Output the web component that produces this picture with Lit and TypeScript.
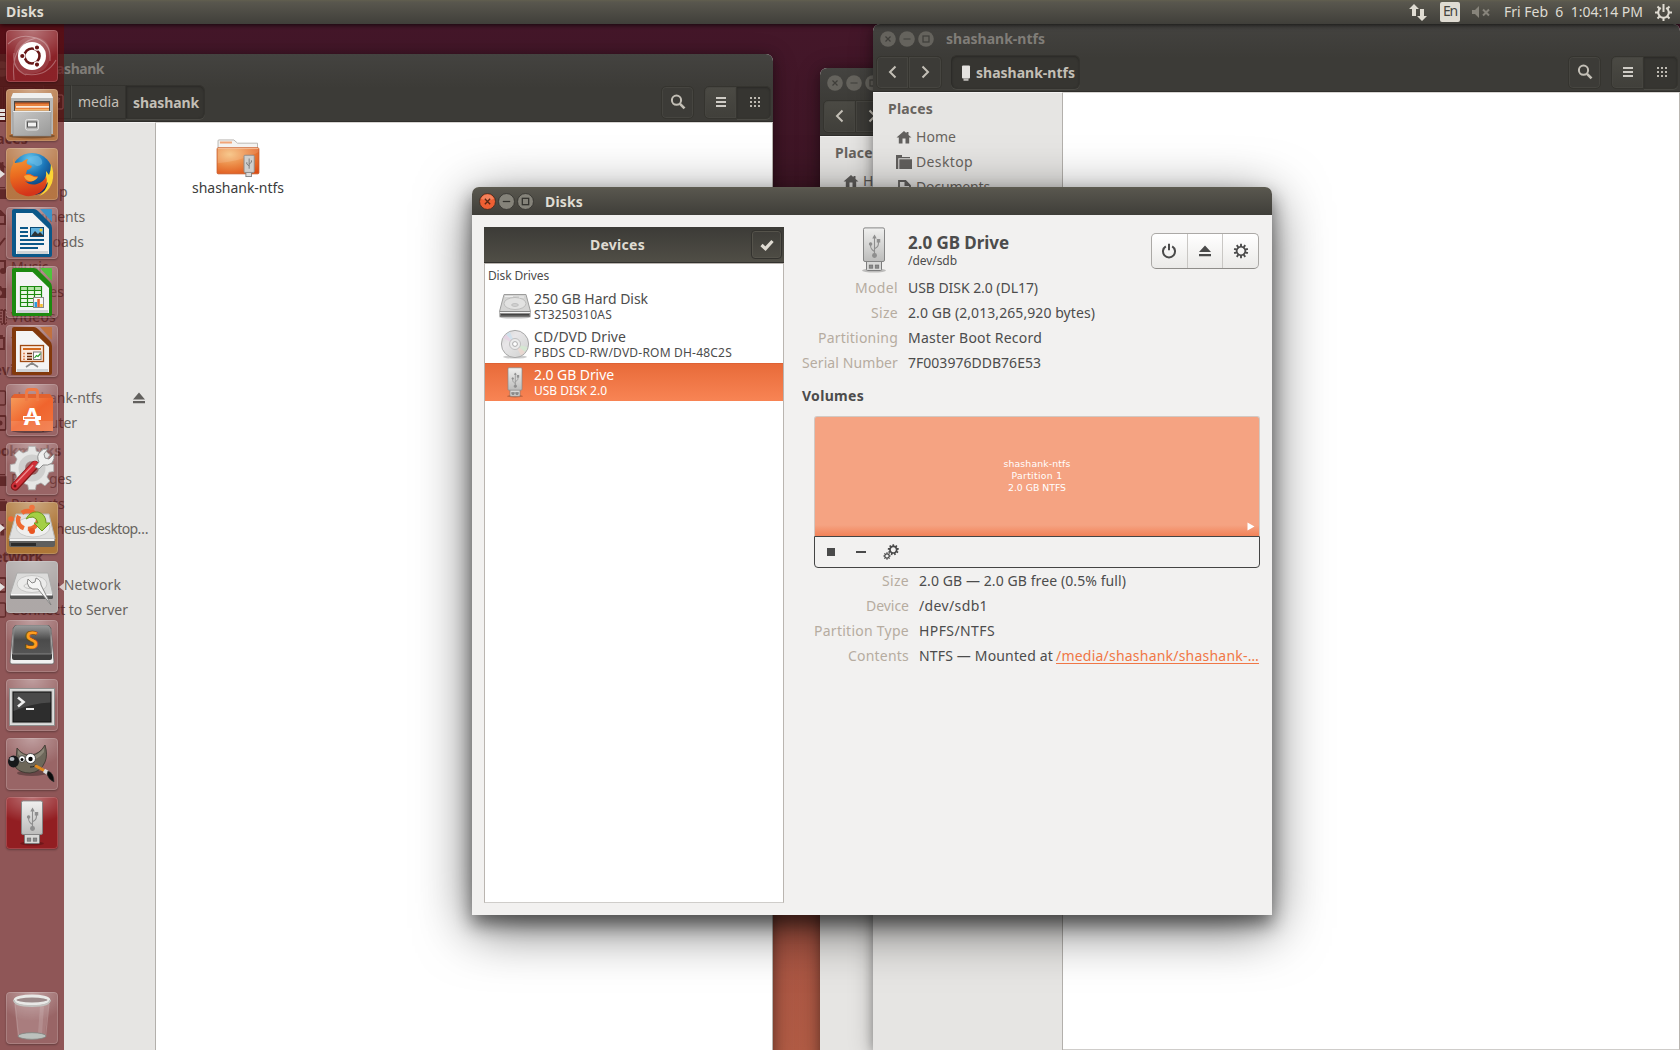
import { LitElement, html, svg, css, nothing } from "lit";
import { customElement, property, query } from "lit/decorators.js";

/* ---------- text that is tracked to a given advance width ---------- */
@customElement("fit-text")
class FitText extends LitElement {
  static styles = css`
    :host { display: inline-block; white-space: pre; flex: none; }
  `;
  @property() text = "";
  @property({ type: Number }) w = 0;
  @query("span") span!: HTMLSpanElement;
  render() {
    return html`<span>${this.text}</span>`;
  }
  updated() {
    this.span.style.letterSpacing = "0px";
    if (!this.w) return;
    const now = this.span.getBoundingClientRect().width;
    this.span.style.letterSpacing = `${(this.w - now) / this.text.length}px`;
  }
}

const t = (text: string, w = 0) => html`<fit-text .text=${text} .w=${w}></fit-text>`;

/* ---------- shared drawings ---------- */
const usb = (w: number, h: number) => html`
  <svg width=${w} height=${h} viewBox="0 0 24 46">
    <defs>
      <linearGradient id="ub" x1="0" y1="0" x2="0" y2="1">
        <stop offset="0" stop-color="#f0f0ef" /><stop offset="1" stop-color="#bcbcbb" />
      </linearGradient>
    </defs>
    <ellipse cx="12" cy="43.5" rx="12" ry="2" fill="#000" opacity=".22" />
    <rect x="4.5" y="33" width="15" height="10.5" rx="1" fill="#d8d8d7" stroke="#7c7c7c" />
    <rect x="7.2" y="38" width="3.6" height="3.2" fill="#8a8a8a" stroke="#666" stroke-width=".6" />
    <rect x="13.2" y="38" width="3.6" height="3.2" fill="#8a8a8a" stroke="#666" stroke-width=".6" />
    <rect x="1.5" y=".9" width="21" height="33.6" rx="1.5" fill="url(#ub)" stroke="#858585" />
    <g fill="#8e8e8e" stroke="#8e8e8e" stroke-width="1.1">
      <path d="M12.5 10v18M12.5 24.5C8 22 8.6 20 8.6 17.5M12.5 21.8c4-2 4-4 4-6.8" fill="none" />
      <circle cx="12.5" cy="28.5" r="1.9" />
      <circle cx="8.6" cy="17" r="1.2" />
      <rect x="15.3" y="12.6" width="2.4" height="2.4" />
      <path d="M12.5 8.6l1.3 2.4h-2.6z" />
    </g>
  </svg>`;

const gearPath = (cx: number, cy: number, ro: number, ri: number, n: number) => {
  const p: string[] = [];
  for (let i = 0; i < n; i++) {
    const a = (i / n) * Math.PI * 2 - Math.PI / 2;
    const s = Math.PI / n;
    for (const [r, d] of [[ri, -0.62], [ro, -0.4], [ro, 0.4], [ri, 0.62]]) {
      p.push(`${(cx + r * Math.cos(a + d * s)).toFixed(2)} ${(cy + r * Math.sin(a + d * s)).toFixed(2)}`);
    }
  }
  return `M${p.join("L")}Z`;
};

/* ---------- file manager window ---------- */
const side: Record<string, unknown> = {
  home: svg`<path d="M8 2L.5 8.500h2.300V14.500h3.700V9.500h3v5h3.700V8.500h2.300L12.500 6V3h-2v1.200z"/>`,
  folder: svg`<path d="M0 1h6v2h8v1.200H2.300V15H0z"/><path d="M3.300 5.200H16V15H3.300z"/>`,
  doc: svg`<path d="M3 2h6.500L14 6.500V15H3z" fill="none" stroke="currentColor" stroke-width="1.800"/><path d="M8.500 2v5H14z"/>`,
  down: svg`<path d="M2 8l5 5 7-9" fill="none" stroke="currentColor" stroke-width="2"/>`,
  music: svg`<path d="M3 2h11v9M3 2v10" fill="none" stroke="currentColor" stroke-width="2"/><circle cx="3" cy="12" r="2.500"/><circle cx="12" cy="12" r="3"/>`,
  camera: svg`<path fill-rule="evenodd" d="M1 4h4l1-2h4l1 2h4.500v10H1zM8 6a3 3 0 1 0 .01 0z"/>`,
  film: svg`<path d="M10 1h6v14h-6z" fill="none" stroke="currentColor" stroke-width="1.400" stroke-dasharray="2 1"/><path d="M12 1h2v14h-2z"/>`,
  trash: svg`<path d="M2 4h12M5 4V2h6v2M4 4v11h9V4" fill="none" stroke="currentColor" stroke-width="1.800"/>`,
  drive: svg`<rect x="6" y="1" width="8.500" height="14" rx="1.500" fill="none" stroke="currentColor" stroke-width="1.300"/>`,
  disk: svg`<rect x="3" y="1" width="12" height="14" rx="1.500" fill="none" stroke="currentColor" stroke-width="1.800"/><circle cx="9" cy="8" r="2.500"/>`,
};

type Row = [string, string, number, boolean?];
const PLACES: (Row | string)[] = [
  "Places",
  ["home", "Home", 40], ["folder", "Desktop", 57], ["doc", "Documents", 74], ["down", "Downloads", 73],
  ["music", "Music", 37], ["camera", "Pictures", 53], ["film", "Videos", 45], ["trash", "Trash", 36],
  "Devices",
  ["drive", "shashank-ntfs", 91, true], ["disk", "Computer", 66],
  "Bookmarks",
  ["folder", "Packages", 61], ["folder", "Projects", 54], ["home", "prometheus-desktop…", 137],
  "Network",
  ["disk", "Browse Network", 110], ["drive", "Connect to Server", 117],
];
const HEAD_W: Record<string, number> = { Places: 45, Devices: 55, Bookmarks: 78, Network: 60 };

@customElement("file-window")
class FileWindow extends LitElement {
  static styles = css`
    :host { display: flex; flex-direction: column; background: #fff; border-radius: 7px 7px 0 0;
      box-shadow: 0 2px 12px rgba(0,0,0,.35), 0 4px 26px rgba(0,0,0,.22); overflow: hidden; }
    .head { height: 68px; flex: none; box-sizing: border-box; border-bottom: 1px solid #2f2e2b;
      background: linear-gradient(#444340, #3c3b37 34px, #3c3b37); }
    .title { height: 31px; display: flex; align-items: center; padding: 0 0 2px 7px; box-sizing: border-box; }
    .ctl { width: 16px; height: 16px; margin-right: 3px; }
    .name { margin-left: 9px; font-weight: 700; color: #807d78; }
    .tools { display: flex; align-items: center; height: 34px; padding: 0 2px 0 3px; color: #c3bfb6; }
    .btn { width: 33px; height: 33px; box-sizing: border-box; display: flex; align-items: center; justify-content: center;
      border: 1px solid #35342f; box-shadow: inset 0 0 0 1px #464540; }
    .l { border-radius: 5px 0 0 5px; }
    .r { border-radius: 0 5px 5px 0; border-left: 0; }
    .lit { background: linear-gradient(#4b4a44, #403f3a); }
    .on { background: #363531; box-shadow: inset 0 1px 2px #2a2926, 0 1px 0 #4a4944; }
    .r.on { width: 34px; padding-left: 2px; }
    .one { border-radius: 5px; }
    .crumbs { display: flex; margin-left: 9px; height: 34px; }
    .trail { margin-left: 6px; }
    .crumb { display: flex; align-items: center; box-sizing: border-box; border: 1px solid #33322e;
      border-left: 1px solid #4b4a45; padding: 0 6px; height: 34px; }
    .cur { font-weight: 700; border-radius: 0 6px 6px 0; padding: 2px 5px 0 6px; border-left-color: #2c2b28; }
    .solo { border-radius: 6px; padding: 2px 4px 0 9px; gap: 5px; }
    .free { flex: 1; }
    .find { margin-right: 10px; }
    .body { flex: 1; display: flex; min-height: 0; }
    .side { box-sizing: border-box; flex: none; background: #e6e5e3; border-right: 1px solid #b3b0ac;
      border-top: 1px solid #f2f1f0; color: #68645f; overflow: hidden; }
    .hd { height: 31px; line-height: 31px; padding-left: 15px; font-weight: 700; display: flex; }
    .row { height: 25px; line-height: 25px; display: flex; align-items: center; padding-left: 24px; }
    .row svg { margin-right: 3px; color: #62605e; fill: currentColor; flex: none; }
    .row svg:first-child { margin-left: -1px; margin-right: 4px; }
    .row .ej { margin: 0 10px 0 auto; }
    .view { flex: 1; display: flex; padding: 16px 0 0 26px; box-sizing: border-box; border-right: 1px solid #b9b6b1;
      border-top: 1px solid #d7d5d2; border-bottom: 1px solid #cfcdca; }
    .file { width: 112px; height: 60px; display: flex; flex-direction: column; align-items: center; color: #3c3c3c; }
    .file fit-text { line-height: 22px; margin-top: -1px; }
  `;
  @property() name = "";
  @property({ type: Number }) nameW = 63;
  @property({ type: Number }) sideW = 189;
  @property({ type: Number }) rows = PLACES.length;
  @property() mode: "path" | "solo" | "bare" = "bare";

  ctl(kind: string) {
    const g = kind === "x" ? svg`<path d="M5.500 5.500l5 5M10.500 5.500l-5 5"/>`
      : kind === "-" ? svg`<path d="M4.500 8h7"/>` : svg`<rect x="5" y="5" width="6" height="6"/>`;
    return html`<svg class="ctl" viewBox="0 0 16 16"><circle cx="8" cy="8" r="7.800" fill="#65635d"/><g fill="none" stroke="#3f3e3a" stroke-width="1.200">${g}</g></svg>`;
  }
  arrow(d: string) {
    return html`<svg width="16" height="16" viewBox="0 0 16 16" fill="none" stroke="currentColor" stroke-width="2"><path d=${d} /></svg>`;
  }
  path() {
    if (this.mode === "path") return html`<div class="crumbs trail">
      <div class="crumb"><svg width="14" height="16" viewBox="0 0 14 16" fill="none" stroke="currentColor"><rect x="1" y="1" width="12" height="14" rx="1"/><path d="M3 12l7-8M4 4h5v4H4z"/></svg></div>
      <div class="crumb">${t("media", 41)}</div>
      <div class="crumb on cur">${t("shashank", 66)}</div></div>`;
    if (this.mode === "bare") return nothing;
    return html`<div class="crumbs"><div class="crumb on cur solo">
      <svg width="10" height="16" viewBox="0 0 10 16"><rect x="1" y=".5" width="8" height="13" rx="1" fill="#e4e2df"/><rect x="2.500" y="13.500" width="5" height="2.300" fill="#bdbbb7"/></svg>
      ${t("shashank-ntfs", 99)}</div></div>`;
  }
  render() {
    return html`
      <div class="head">
        <div class="title">${this.ctl("x")}${this.ctl("-")}${this.ctl("o")}<div class="name">${this.name ? t(this.name, this.nameW) : nothing}</div></div>
        <div class="tools">
          <div class="btn l ${this.mode === "bare" ? "lit" : ""}">${this.arrow("M10.500 2.500L5 8l5.500 5.500")}</div>
          <div class="btn r">${this.arrow("M5.500 2.500L11 8l-5.500 5.500")}</div>
          ${this.path()}
          <div class="free"></div>
          <div class="btn one find"><svg width="16" height="16" viewBox="0 0 16 16" fill="none" stroke="currentColor" stroke-width="2"><circle cx="6.500" cy="6.200" r="4.600"/><path d="M10 9.800l4.500 4.500" stroke-width="2.600"/></svg></div>
          <div class="btn l lit"><svg width="12" height="12" viewBox="0 0 12 12" fill="#cfccc6"><path d="M1 1h10v2H1zM1 5h10v2H1zM1 9h10v2H1z"/></svg></div>
          <div class="btn r on"><svg width="12" height="12" viewBox="0 0 12 12" fill="#bdb9b1">${[1, 5, 9].map((y) => [1, 5, 9].map((x) => svg`<rect x=${x} y=${y} width="2" height="2"/>`))}</svg></div>
        </div>
      </div>
      <div class="body">
        <div class="side" style="width:${this.sideW + 1}px">
          ${PLACES.slice(0, this.rows).map((p) => typeof p === "string"
            ? html`<div class="hd">${t(p, HEAD_W[p])}</div>`
            : html`<div class="row"><svg width="16" height="16" viewBox="0 0 16 16">${side[p[0]]}</svg>${t(p[1], p[2])}
              ${p[3] ? html`<svg class="ej" width="12" height="12" viewBox="0 0 12 12"><path d="M6 .5L12 7.500H0zM0 9h12v2.200H0z"/></svg>` : nothing}</div>`)}
        </div>
        <div class="view">
          ${this.mode === "path" ? html`<div class="file">
            <svg width="48" height="42" viewBox="0 0 48 42">
              <defs><radialGradient id="fo" cx=".3" cy=".25" r=".95"><stop offset="0" stop-color="#f6c07c"/><stop offset=".5" stop-color="#ea8440"/><stop offset="1" stop-color="#dc4a12"/></radialGradient></defs>
              <path d="M2.500 12V2q0-1 1-1h16l4 3.500h21.500v8z" fill="#f4f3f1" stroke="#b5b2ae"/>
              <path d="M4.500 2.800h13v2h-13z" fill="#f0a477"/>
              <rect x="1.500" y="9.500" width="45" height="28" rx="1.200" fill="url(#fo)" stroke="#c5501c" stroke-width=".9"/>
              <path d="M2 10.300h44" stroke="#f7c39c"/>
              <path d="M2 26Q28 24 46 14V10.500H2z" fill="#fff" opacity=".13"/>
              <rect x="32.500" y="36" width="6" height="4.500" fill="#ddd" stroke="#777" stroke-width=".9"/>
              <rect x="30.500" y="17.500" width="11" height="18.500" rx="1" fill="#cfcfce" stroke="#8b8b8b"/>
              <path d="M36 21v11M36 29l-2.500-2v-2M36 27l2.500-2v-2" stroke="#777" fill="none"/>
            </svg>${t("shashank-ntfs", 92)}</div>` : nothing}
        </div>
      </div>`;
  }
}

/* ---------- disks window ---------- */
const hdd = html`<svg width="32" height="26" viewBox="0 0 32 26">
  <ellipse cx="16" cy="24" rx="16" ry="1.600" opacity=".25"/>
  <path d="M5 1.500h22l4.500 17H.5z" fill="#d4d4d3" stroke="#9d9d9c"/>
  <path d="M.5 18.500h31V23q0 1-1 1h-29q-1 0-1-1z" fill="#777675"/>
  <path d="M1 19h30v1.200H1z" fill="#f3f3f3"/><path d="M2 21h28v1.500H2z" fill="#444"/>
  <ellipse cx="16" cy="10.500" rx="11" ry="6" fill="#e2e2e1" stroke="#bdbdbc"/>
  <ellipse cx="16" cy="12" rx="3.400" ry="1.400" fill="#d3d3d2" stroke="#b2b2b1" stroke-width=".7"/>
  <path d="M6 3.500h8M20 4h5" stroke="#eee"/></svg>`;
const cd = html`<svg width="32" height="30" viewBox="0 0 32 30">
  <defs><linearGradient id="cdg" x1="0" y1="0" x2="1" y2="1"><stop offset="0" stop-color="#d5d5d5"/><stop offset=".35" stop-color="#e8e6e8"/><stop offset=".6" stop-color="#dedede"/><stop offset="1" stop-color="#cfcfcf"/></linearGradient></defs>
  <ellipse cx="16" cy="28" rx="12" ry="1.600" opacity=".2"/>
  <circle cx="16" cy="15" r="13.600" fill="url(#cdg)" stroke="#a8a8a8"/>
  <path d="M16 15L7 5.500A13 13 0 0 1 11 3z" fill="#c9dff0" opacity=".7"/><path d="M16 15L4 9A13 13 0 0 1 7 5.500z" fill="#e6cfe3" opacity=".7"/>
  <path d="M16 15l12.500 3A13 13 0 0 1 26 23z" fill="#d3ead0" opacity=".8"/><path d="M16 15l10 8a13 13 0 0 1-4 3.500z" fill="#f1d9cf" opacity=".7"/>
  <circle cx="16" cy="15" r="5.500" fill="#ececec" stroke="#b5b5b5" stroke-width=".8"/><circle cx="16" cy="15" r="2.400" fill="#fff" stroke="#999" stroke-width=".8"/></svg>`;

@customElement("disks-window")
class DisksWindow extends LitElement {
  static styles = css`
    :host { display: flex; flex-direction: column; background: #f2f1f0; border-radius: 7px 7px 0 0; color: #4c4c4c;
      box-shadow: 0 9px 18px rgba(0,0,0,.48), 0 13px 54px rgba(0,0,0,.6); }
    .title { height: 28px; flex: none; display: flex; align-items: center; box-sizing: border-box; padding: 1px 0 0 7px;
      border-radius: 7px 7px 0 0; background: linear-gradient(#5d5b50, #57554d 3px, #3f3e39); color: #dfdbd2; font-weight: 700; }
    .ctl { width: 17px; height: 17px; margin-right: 2px; }
    .title fit-text { margin-left: 9px; }
    .main { flex: 1; display: flex; padding: 12px; }
    .left { width: 300px; display: flex; flex-direction: column; flex: none; }
    .lhead { height: 36px; box-sizing: border-box; display: flex; align-items: center; padding-right: 2px;
      background: linear-gradient(#3c3b37, #504e46); border-bottom: 1px solid #33322e; color: #dfdbd2; font-weight: 700; }
    .lname { flex: 1; text-align: center; }
    .chk { width: 31px; height: 29px; box-sizing: border-box; border: 1px solid #33322e; border-radius: 4px; box-shadow: inset 0 0 0 1px #55534b;
      display: flex; align-items: center; justify-content: center; }
    .list { flex: 1; background: #fff; border: 1px solid #bab5b0; border-bottom-color: #cfcdca; }
    .cat { height: 23px; line-height: 24px; padding-left: 3px; font-size: 12px; }
    .dev { height: 38px; display: flex; padding-left: 14px; }
    .pic { width: 32px; margin-right: 3px; display: flex; align-items: center; justify-content: center; }
    .dt { display: flex; flex-direction: column; padding-top: 2px; }
    .dt .a { line-height: 20px; height: 19px; }
    .dt .b { font-size: 12px; line-height: 15px; height: 15px; margin-top: -1px; }
    .sel { background: linear-gradient(#e86b3a, #f88454); color: #fff; border-top: 1px solid #de6234; box-sizing: border-box; }
    .sel .dt { padding-top: 1px; }
    .right { flex: 1; display: flex; flex-direction: column; padding-left: 18px; }
    .top { display: flex; height: 48px; }
    .big { width: 24px; margin: 0 20px 0 60px; }
    .hd { padding-left: 2px; display: flex; flex-direction: column; }
    .hd .n { font-size: 17px; font-weight: 700; line-height: 22px; margin-top: 5px; }
    .hd .p { font-size: 12px; line-height: 15px; margin-top: -1px; }
    .btns { margin: 6px 1px 0 auto; display: flex; height: 36px; box-sizing: border-box; border: 1px solid #aba9a6; border-bottom-color: #8f8d8a; border-radius: 5px; width: 108px;
      background: linear-gradient(#fff, #ebeae8); }
    .btns div { flex: 1; display: flex; align-items: center; justify-content: center; border-left: 1px solid #c9c7c4; }
    .btns div:first-child { border-left: 0; }
    .kv { display: flex; height: 25px; line-height: 25px; }
    .k { width: 96px; text-align: right; color: #b6aca0; margin-right: 10px; flex: none; }
    .vol .k { width: 107px; }
    .vh { font-weight: 700; height: 25px; line-height: 25px; margin-top: 8px; }
    .map { margin: 8px 0 0 12px; width: 446px; height: 120px; box-sizing: border-box; border: 1px solid #d2c9c3; border-bottom: 0; border-radius: 3px 3px 0 0;
      background: linear-gradient(#f5a382 108px, #f28258); color: #fff; font: 9.300px/12px "DejaVu Sans", sans-serif; flex: none;
      display: flex; flex-direction: column; align-items: center; padding-top: 41px; position: relative; }
    .tri { position: absolute; right: 4px; bottom: 5px; }
    .bar { margin-left: 12px; width: 446px; height: 32px; box-sizing: border-box; border: 1px solid #444; border-radius: 0 0 4px 4px; flex: none; display: flex; align-items: center; padding-left: 12px; }
    .sq { width: 8px; height: 8px; background: #4a4a4a; }
    .mn { width: 10px; height: 2px; background: #4a4a4a; margin: 0 17px 0 21px; }
    .link { color: #f07746; margin-left: 3px; height: 20px; line-height: 25px; border-bottom: 1px solid #f07746; }
  `;
  kv(k: string, kw: number, v: unknown, vw = 0) {
    return html`<div class="kv"><div class="k">${t(k, kw)}</div>${typeof v === "string" ? t(v, vw) : v}</div>`;
  }
  dev(pic: unknown, a: string, aw: number, b: string, bw: number, sel = false) {
    return html`<div class="dev ${sel ? "sel" : ""}"><div class="pic">${pic}</div><div class="dt"><div class="a">${t(a, aw)}</div><div class="b">${t(b, bw)}</div></div></div>`;
  }
  render() {
    return html`
      <div class="title">
        <svg class="ctl" viewBox="0 0 16 16"><circle cx="8" cy="8" r="7.500" fill="#ee5f33" stroke="#3a2a22" stroke-width=".8"/><path d="M2 5.500a6.500 6.500 0 0 1 12 0q-6 3-12 0" fill="#f99a78" opacity=".6"/><path d="M5.500 5.500l5 5M10.500 5.500l-5 5" stroke="#5a2713" stroke-width="1.300"/></svg>
        <svg class="ctl" viewBox="0 0 16 16"><circle cx="8" cy="8" r="7.500" fill="#85837a" stroke="#33322e" stroke-width=".8"/><path d="M4.500 8h7" stroke="#33322e" stroke-width="1.200"/></svg>
        <svg class="ctl" viewBox="0 0 16 16"><circle cx="8" cy="8" r="7.500" fill="#85837a" stroke="#33322e" stroke-width=".8"/><rect x="5" y="5" width="6" height="6" fill="none" stroke="#33322e" stroke-width="1.200"/></svg>
        ${t("Disks", 38)}
      </div>
      <div class="main">
        <div class="left">
          <div class="lhead"><div class="lname">${t("Devices", 55)}</div><div class="chk"><svg width="14" height="12" viewBox="0 0 14 12"><path d="M1.500 6l4 3.700L12.500 2" fill="none" stroke="#dfdbd2" stroke-width="3.200"/></svg></div></div>
          <div class="list">
            <div class="cat">${t("Disk Drives", 61)}</div>
            ${this.dev(hdd, "250 GB Hard Disk", 114, "ST3250310AS", 78)}
            ${this.dev(cd, "CD/DVD Drive", 92, "PBDS CD-RW/DVD-ROM DH-48C2S", 198)}
            ${this.dev(usb(16, 31), "2.0 GB Drive", 80, "USB DISK 2.0", 73, true)}
          </div>
        </div>
        <div class="right">
          <div class="top">
            <div class="big">${usb(24, 46)}</div>
            <div class="hd"><div class="n">${t("2.0 GB Drive", 101)}</div><div class="p">${t("/dev/sdb", 49)}</div></div>
            <div class="btns">
              <div><svg width="16" height="16" viewBox="0 0 16 16" fill="none" stroke="#4a4a4a" stroke-width="2"><path d="M4.800 3.300a6 6 0 1 0 6.400 0M8 .8v6.400"/></svg></div>
              <div><svg width="12" height="12" viewBox="0 0 12 12" fill="#4a4a4a"><path d="M6 .5L12 7H0zM0 9h12v2.200H0z"/></svg></div>
              <div><svg width="16" height="16" viewBox="0 0 16 16" fill="#4a4a4a"><path fill-rule="evenodd" d="${gearPath(8, 8, 7.3, 5, 10)}M8 4.600a3.400 3.400 0 1 0 .01 0z"/></svg></div>
            </div>
          </div>
          ${this.kv("Model", 43, "USB DISK 2.0 (DL17)", 130)}
          ${this.kv("Size", 27, "2.0 GB (2,013,265,920 bytes)", 187)}
          ${this.kv("Partitioning", 80, "Master Boot Record", 134)}
          ${this.kv("Serial Number", 96, "7F003976DDB76E53", 133)}
          <div class="vh">${t("Volumes", 62)}</div>
          <div class="map">${t("shashank-ntfs", 67)}${t("Partition 1", 51)}${t("2.0 GB NTFS", 58)}
            <svg class="tri" width="8" height="9" viewBox="0 0 8 9"><path d="M.5 .5v8l7-4z" fill="#fff"/></svg></div>
          <div class="bar"><div class="sq"></div><div class="mn"></div>
            <svg width="16" height="16" viewBox="0 0 16 16" fill="#4a4a4a"><path fill-rule="evenodd" d="${gearPath(10.3, 5.7, 5.6, 4.2, 9)}M10.300 3.200a2.500 2.500 0 1 0 .01 0z"/><path fill-rule="evenodd" d="${gearPath(4, 12, 3.7, 2.7, 8)}M4 10.400a1.600 1.600 0 1 0 .01 0z"/></svg>
          </div>
          <div class="vol">
            ${this.kv("Size", 27, "2.0 GB — 2.0 GB free (0.5% full)", 207)}
            ${this.kv("Device", 43, "/dev/sdb1", 69)}
            ${this.kv("Partition Type", 95, "HPFS/NTFS", 76)}
            ${this.kv("Contents", 61, html`${t("NTFS — Mounted at", 134)}<span class="link">${t("/media/shashank/shashank-…", 203)}</span>`)}
          </div>
        </div>
      </div>`;
  }
}

/* ---------- launcher ---------- */
const office = (dark: string, light: string, inner: unknown) => svg`
  <path d="M8 2h20q2 0 4 2l12 12q2 2 2 5v27q0 2-2 2H8q-2 0-2-2V4q0-2 2-2z" fill=${dark}/>
  <path d="M10 6h16.500L43 22v25H10z" fill="#f4f4f4"/><path d="M11 44h31v3H11z" fill="#cfd3d6"/>
  <path d="M34 2h11q1 0 1 1v12z" fill=${light}/>${inner}`;

const ICONS: Record<string, unknown> = {
  dash: svg`
    <path d="M8 30Q6 8 26 7q20 0 18 21-3 17-24 16Q8 40 8 30z" fill="#fff" opacity=".12"/>
    <g fill="none" stroke="#fff" opacity=".3" stroke-width="1.100"><path d="M2 14Q12 4 26 7q20 4 18 24M8 50Q4 14 30 8M20 45q-14-6-12-22M50 30Q40 48 18 44"/></g>
    <circle cx="26" cy="26" r="14" fill="#fff"/>
    <circle cx="26" cy="26" r="7.500" fill="none" stroke="#671717" stroke-width="2.600"/>
    <g fill="#671717" stroke="#fff" stroke-width="1.200"><circle cx="16.300" cy="26" r="2.700"/><circle cx="31" cy="17.500" r="2.700"/><circle cx="31" cy="34.600" r="2.700"/></g>`,
  files: svg`
    <ellipse cx="26" cy="47" rx="23" ry="2.500" opacity=".3"/>
    <path d="M7 4h38l2 5v36H5V9z" fill="#b9b9b8"/><path d="M7 4h38l2 5H5z" fill="#f0f0ef"/>
    <path d="M8 12h36v11H8z" fill="#4b4743"/><path d="M9 14h34v8H9z" fill="#e8833e"/><path d="M9 13.500h34v1.500H9z" fill="#c95f26"/><path d="M10 17h33v1.800H10z" fill="#fbe9da"/><path d="M9 20h34v2H9z" fill="#f4b26a"/>
    <path d="M7 22h38v25H7z" fill="url(#metal)" stroke="#8c8c8b" stroke-width=".6"/><path d="M7 22h38v1H7z" fill="#ececec"/>
    <rect x="19.500" y="30.500" width="13" height="10.500" rx="2" fill="#b4b4b3" stroke="#e4e4e3"/><rect x="21.500" y="33" width="9" height="5" fill="#f2f2f1" stroke="#555"/>`,
  firefox: svg`
    <circle cx="26" cy="26" r="21" fill="url(#globe)"/>
    <path d="M22 12q4-5 10-4 5 3 4 8-5 4-8 0-4 0-6-4z" fill="#6bbbe6" opacity=".6"/>
    <path d="M45 16q4 9 1 19-4 10-13 13 8-6 9-14-3 4-6 5 5-8 4-16l3 4q2-5 2-11z" fill="#fbd534"/>
    <path d="M9 9q-2 3 0 6l7-1q4-3 6-3-2 3-1 5l5 2q-1 3-5 4l-1 4q4-1 6 1 3 2 6 1-1 3-5 5-4 2-8 0 5 5 12 3 7-2 9-8 3 9-4 15-7 6-16 5Q8 46 4.500 34 3 22 7.500 15q-1-4 1.500-6z" fill="url(#fox)"/>
    <path d="M18 28q4-2 8 0 3 2 6 1-3 5-9 4-4-1-5-5z" fill="#f9a637"/>`,
  writer: office("#0b5889", "#3b93c9", svg`
    <path d="M14 21h8M14 25h8M14 29h8M14 33h24M14 37h24M14 41h18" stroke="#0b5889" stroke-width="1.800"/>
    <rect x="24.500" y="20.500" width="13" height="9" fill="#63b2de" stroke="#0b4a76"/><path d="M25 29l4-5 3 3 2-2 4 4z" fill="#2e3436"/><circle cx="35" cy="23" r="1.500" fill="#f3c82b"/>`),
  calc: office("#1d8a10", "#4fc43c", svg`
    <rect x="14.500" y="20.500" width="21" height="20" fill="#eaf7e6"/><path d="M14.500 20.500h21v4h-21z" fill="#b5e5a8"/>
    <path d="M14.500 20.500h21v20h-21zM21.500 20v21M28.500 20v21M14 24.500h22M14 28.500h22M14 32.500h22M14 36.500h22" fill="none" stroke="#1d8a10" stroke-width="1.200"/>
    <rect x="27.500" y="31.500" width="10" height="10" fill="#f6f6f6" stroke="#888"/><path d="M28.500 36h2.500v5h-2.500z" fill="#2b9be0"/><path d="M31.300 33h2.500v8h-2.500z" fill="#e8632b"/><path d="M34.200 38h2.500v3h-2.500z" fill="#f2bd2b"/>`),
  impress: office("#82390c", "#c1713f", svg`
    <rect x="14.500" y="20.500" width="23" height="16" fill="#fbe9dc" stroke="#a04a12" stroke-width="1.300"/><path d="M17 24h18" stroke="#d2691e" stroke-width="2"/>
    <path d="M17 28.500h2M17 31.500h2M17 34.300h2" stroke="#e0895a" stroke-width="1.600"/><path d="M21 28.500h5M21 31.500h5M21 34.300h5" stroke="#6b2a05" stroke-width="1.600"/>
    <rect x="27.500" y="27" width="7.500" height="7.500" fill="#fff" stroke="#777"/><path d="M28.500 33l2-2.500 1.500 1 2.500-3" stroke="#2ba02b" fill="none" stroke-width="1.200"/><path d="M26 38v-1M20 42l6-4 6 4" stroke="#888" fill="none" stroke-width="1.600"/>`),
  store: svg`
    <ellipse cx="26" cy="47" rx="20" ry="2" opacity=".35"/>
    <path d="M8 10h36l3 4H5z" fill="#e2622f"/><path d="M5 14h42v33H5z" fill="url(#bag)"/><path d="M5 37h42v10H5z" fill="#fff" opacity=".13"/>
    <path d="M20.500 17V8.500q0-3 3-3h5q3 0 3 3V17" fill="none" stroke="#ef7a45" stroke-width="2.800"/>
    <text x="26" y="40.500" text-anchor="middle" font-size="24" font-weight="700" font-family="Open Sans, sans-serif" fill="#fff">A</text><path d="M17 34h18" stroke="#fff" stroke-width="4"/><path d="M18 34h11" stroke="#f0642d" stroke-width="1.500"/>`,
  settings: svg`
    <path fill-rule="evenodd" d="${gearPath(26, 25, 22, 17.5, 8)}M26 18a7 7 0 1 0 .01 0z" fill="#e6e6e5" stroke="#a9a9a8" stroke-width=".8"/>
    <circle cx="26" cy="25" r="10.500" fill="none" stroke="#cfcfce" stroke-width="6"/>
    <path d="M9 43.500L29 22" stroke="#84191a" stroke-width="8.500" stroke-linecap="round"/><path d="M9 43L29 21.500" stroke="#cf3038" stroke-width="6.500" stroke-linecap="round"/>
    <path d="M10 40L27 22" stroke="#ee8b8e" stroke-width="1.300"/><circle cx="9" cy="43" r="1.500" fill="#6a0f12"/>
    <path d="M29 24l4-5q-3-6 1-10 3-4 8-3l-4 5 1 4 4 1 5-5q1 5-2 9-4 3-9 2l-4 4z" fill="#f0f0ef" stroke="#858584" stroke-width=".9"/>`,
  creator: svg`
    <path d="M10 12h33l6 25H3z" fill="#e0e0df" stroke="#b5b5b4"/><path d="M3 37h46v6q0 2-2 2H5q-2 0-2-2z" fill="#5f5f5e"/><path d="M3.500 37h45v2h-45z" fill="#f3f3f2"/><path d="M5 41h25v3H5z" fill="#2b2b2b"/>
    <ellipse cx="27" cy="25" rx="17" ry="10" fill="#efefee" stroke="#cbcbca"/>
    <ellipse cx="22" cy="18" rx="10" ry="9" fill="none" stroke="#ee6a32" stroke-width="4.500" stroke-dasharray="15 4"/><circle cx="5" cy="17" r="2.800" fill="#ee6a32"/><circle cx="26" cy="5.500" r="2.800" fill="#f0743f"/><circle cx="26" cy="29" r="3" fill="#e95420"/>
    <path d="M20 17Q24 9 32 10q8 2 8 11h4l-8 8-8-8h4q-1-5-5-6-4 0-7 2z" fill="#a4cf45" stroke="#6f9a1e"/>`,
  disks: svg`
    <path d="M11 12h31l5 22H4z" fill="#dcdcdb" stroke="#acacab"/><path d="M4 33h43v3.500q0 1.500-1.500 1.500h-40Q4 38 4 36.500z" fill="#555"/><path d="M4.500 33h42v1.600h-42z" fill="#fafafa"/>
    <ellipse cx="26" cy="23" rx="15" ry="8.500" fill="#ebebea" stroke="#c8c8c7"/><ellipse cx="24" cy="25" rx="6" ry="2.500" fill="none" stroke="#c2c2c1"/>
    <path d="M22 18l4 4 3-1 1-4q5 2 5 7l10 20-13-16q-6 1-9-2-3-4-1-8z" fill="#f5f5f4" stroke="#7f7f7e" stroke-width=".9"/>`,
  sublime: svg`
    <path d="M7 8h38l3 34q0 2-2 2H6q-2 0-2-2z" fill="#f1f1f1" stroke="#666" stroke-width=".8"/>
    <path d="M11 5h30q3 0 3.500 3L46 33v5q0 2-2 2H8q-2 0-2-2v-5L7.500 8Q8 5 11 5z" fill="#3c3c3c"/><path d="M11 5.500h30q2.500 0 3 3L45.500 34h-39L8 8.500q.5-3 3-3z" fill="url(#key)" stroke="#999" stroke-width=".7"/>
    <text x="25.700" y="28.500" text-anchor="middle" font-size="25" font-weight="700" font-family="Open Sans, sans-serif" fill="#ff9d1f" stroke="#7a3c00" stroke-width=".5">S</text>`,
  term: svg`
    <rect x="3.500" y="9.500" width="45" height="37" fill="#dededd" stroke="#8e8e8d"/><rect x="5.500" y="11.500" width="41" height="33" fill="#c2c2c1"/><rect x="7" y="13" width="38" height="30" fill="#2d2d2d" stroke="#111"/><path d="M7.500 13.500h37v10Q26 24 7.500 32z" fill="#fff" opacity=".14"/>
    <path d="M12 18.500l5.500 4.500-5.500 4.500" fill="none" stroke="#eee" stroke-width="2.600"/><path d="M20 30h8" stroke="#eee" stroke-width="2"/>`,
  gimp: svg`
    <ellipse cx="26" cy="35" rx="15" ry="3" opacity=".3"/>
    <path d="M11 10q6 8 14 7 9-1 14-10 3 10 0 17-4 10-15 11-9 0-14-5-2-3 0-8z" fill="#6d675a" stroke="#37342c" stroke-width=".8"/><path d="M12 12q6 7 13 6 8-1 13-8v4q-6 8-14 8-8 0-12-6z" fill="#a09a8b" opacity=".6"/>
    <circle cx="16" cy="21" r="3.300" fill="#fff" stroke="#333" stroke-width=".8"/><circle cx="24.500" cy="20.500" r="5" fill="#fff" stroke="#333" stroke-width=".8"/><circle cx="16" cy="21.500" r="1.500"/><circle cx="24.500" cy="21" r="2.200"/>
    <ellipse cx="7.500" cy="23.500" rx="5.500" ry="6" fill="#16181a"/><ellipse cx="6" cy="21" rx="2.500" ry="2" fill="#d8e0e6" opacity=".8"/>
    <path d="M24 29q6 0 6-3" stroke="#222" fill="none"/><path d="M29 27.500l11 6" stroke="#e08a1e" stroke-width="3"/><path d="M38 32.500l4 2.500" stroke="#ddd" stroke-width="4"/><path d="M42 33q6 2 6 11-6-3-7-8z" fill="#0c0c0c" stroke="#333" stroke-width=".6"/>`,
  trash: svg`
    <path d="M9 9l3.500 36q13 6 26 0L43 9z" fill="#fff" opacity=".16"/><path d="M9 12l3.500 33M43 12l-3.500 33" stroke="#fff" opacity=".2" stroke-width="1.200"/>
    <path d="M36 14l-2 28" stroke="#fff" opacity=".12" stroke-width="4"/>
    <ellipse cx="26" cy="44" rx="14" ry="3.300" fill="#bcc1bd" stroke="#7f8480" stroke-width=".8"/>
    <ellipse cx="26" cy="8" rx="17" ry="4" fill="#9c8a8a" stroke="#e9e9e7" stroke-width="2.800"/><path d="M8 8q0 6 18 6t18-6" fill="none" stroke="#c3c3c0" stroke-width="1.800"/>`,
};

const TILES: [string, string, string?][] = [
  ["dash", "red"], ["files", "tan", "wins"], ["firefox", "tan", "run"], ["writer", ""], ["calc", ""], ["impress", ""],
  ["store", ""], ["settings", ""], ["creator", "gold", "run"], ["disks", "grey", "run focus"],
  ["sublime", ""], ["term", ""], ["gimp", ""], ["usb", "crim"],
];

@customElement("app-launcher")
class AppLauncher extends LitElement {
  static styles = css`
    :host { display: flex; flex-direction: column; gap: 7px; box-sizing: border-box; padding: 6px; background: rgba(97,12,14,.66); }
    .tile { width: 52px; height: 52px; flex: none; box-sizing: border-box; border-radius: 4px; position: relative; display: flex; align-items: center; justify-content: center;
      background: radial-gradient(ellipse 70% 55% at 50% 0, rgba(255,255,255,.4), rgba(255,255,255,.04)), rgba(255,255,255,.06);
      box-shadow: inset 0 0 0 1px rgba(255,255,255,.17), 0 1px 2px rgba(0,0,0,.3); }
    .red { background: radial-gradient(ellipse 80% 60% at 50% 0, rgba(255,255,255,.4), rgba(255,255,255,.04)), #86191f; }
    .crim { background: radial-gradient(ellipse 80% 50% at 50% 0, rgba(255,255,255,.4), rgba(255,255,255,.04)), #8e1519; }
    .tan { background: radial-gradient(ellipse 80% 60% at 50% 0, rgba(255,255,255,.4), rgba(255,255,255,.04)), #b2703c; }
    .gold { background: radial-gradient(ellipse 80% 60% at 50% 0, rgba(255,255,255,.4), rgba(255,255,255,.04)), #ab7130; }
    .grey { background: radial-gradient(ellipse 80% 60% at 50% 0, rgba(255,255,255,.3), rgba(255,255,255,.04)), #aaa4a3; }
    .run::before { content: ""; position: absolute; left: -6px; top: 22px; border: 4px solid transparent; border-left: 5px solid #e4e0df; border-right: 0; }
    .focus::after { content: ""; position: absolute; right: -6px; top: 22px; border: 4px solid transparent; border-right: 5px solid #d9cccc; border-left: 0; }
    .wins::before { content: ""; position: absolute; left: -6px; top: 20px; width: 5px; height: 11px; background: repeating-linear-gradient(#e4e0df 0 3px, transparent 3px 4px); }
    .gap { flex: 1; }
    .defs { position: absolute; width: 0; height: 0; }
  `;
  tile([icon, tone, state = ""]: [string, string, string?]) {
    return html`<div class="tile ${tone} ${state}">${icon === "usb" ? usb(24, 46)
      : html`<svg width="52" height="52" viewBox="0 0 52 52">${ICONS[icon]}</svg>`}</div>`;
  }
  render() {
    return html`
      <svg class="defs"><defs>
        <linearGradient id="metal" x1="0" y1="0" x2="1" y2="1"><stop offset="0" stop-color="#c9c9c8"/><stop offset="1" stop-color="#999998"/></linearGradient>
        <radialGradient id="globe" cx=".45" cy=".15" r=".8"><stop offset="0" stop-color="#64c8f0"/><stop offset=".45" stop-color="#1b76b8"/><stop offset="1" stop-color="#0b2a62"/></radialGradient>
        <linearGradient id="fox" x1="0" y1="0" x2=".2" y2="1"><stop offset="0" stop-color="#f59a35"/><stop offset=".5" stop-color="#ea6a1f"/><stop offset="1" stop-color="#d4351a"/></linearGradient>
        <linearGradient id="bag" x1="0" y1="0" x2="1" y2="1"><stop offset="0" stop-color="#f59a5a"/><stop offset=".5" stop-color="#f0642d"/><stop offset="1" stop-color="#f0743f"/></linearGradient>
        <linearGradient id="key" x1="0" y1="0" x2="0" y2="1"><stop offset="0" stop-color="#9a9a9a"/><stop offset=".5" stop-color="#4b4b4b"/><stop offset="1" stop-color="#555"/></linearGradient>
      </defs></svg>
      ${TILES.map((x) => this.tile(x))}
      <div class="gap"></div>
      ${this.tile(["trash", ""])}`;
  }
}

/* ---------- desktop ---------- */
@customElement("app-root")
class AppRoot extends LitElement {
  static styles = css`
    :host { display: block; position: relative; width: 1680px; height: 1050px; overflow: hidden;
      font: 14px/20px "Noto Sans", "Open Sans", sans-serif;
      background: linear-gradient(#45172a 0, #3f1626 170px, #7a3038 500px, #a85444 900px, #b25c45 1050px); }
    file-window, disks-window, app-launcher, .panel { position: absolute; }
    .w1 { left: -32px; top: 54px; width: 805px; height: 1010px; }
    .w2 { left: 820px; top: 68px; width: 805px; height: 1000px; }
    .w3 { left: 873px; top: 24px; width: 807px; height: 1026px; }
    disks-window { left: 472px; top: 187px; width: 800px; height: 728px; }
    app-launcher { left: 0; top: 24px; width: 64px; height: 1026px; }
    .panel { left: 0; top: 0; right: 0; height: 24px; box-sizing: border-box; display: flex; align-items: center; padding: 0 8px 0 6px;
      background: linear-gradient(#625f4f, #59574e 2px, #403f3a); color: #dfdbd2; box-shadow: 0 1px 5px rgba(0,0,0,.75); }
    .panel fit-text { margin-top: -1px; }
    .menu { flex: 1; font-weight: 700; display: flex; }
    .kbd { width: 20px; height: 20px; margin: -1px 12px 0 13px; border-radius: 2px; background: #dfdbd2; color: #45443f; display: flex; align-items: center; justify-content: center; }
    .date { margin: 0 12px 0 14px; }
  `;
  render() {
    return html`
      <file-window class="w1" .name=${"shashank"} .nameW=${63} .sideW=${187} .mode=${"path"}></file-window>
      <file-window class="w2" .rows=${2}></file-window>
      <file-window class="w3" .name=${"shashank-ntfs"} .nameW=${99} .rows=${4} .mode=${"solo"}></file-window>
      <disks-window></disks-window>
      <app-launcher></app-launcher>
      <div class="panel">
        <div class="menu">${t("Disks", 38)}</div>
        <svg width="18" height="17" viewBox="0 0 18 17" fill="#dfdbd2"><path d="M5 0l5 5H7v7H3V5H0zM13 17l-5-5h3V5h4v7h3z"/></svg>
        <div class="kbd">${t("En", 14)}</div>
        <svg width="18" height="12" viewBox="0 0 18 12"><path d="M0 4h3l4-4v12L3 8H0z" fill="#87847b"/><path d="M11 3.500l6 6M17 3.500l-6 6" stroke="#87847b" stroke-width="2"/></svg>
        <div class="date">${t("Fri Feb  6  1:04:14 PM", 139)}</div>
        <svg width="17" height="17" viewBox="0 0 17 17"><g stroke="#dfdbd2" stroke-width="2" fill="none"><path d="M5.800 3.900a5.300 5.300 0 1 0 5.400 0M8.500 0v8"/><path d="M0 8.500h3M14 8.500h3M8.500 14v3M2.500 2.500l2 2M14.500 2.500l-2 2M2.500 14.500l2-2M14.500 14.500l-2-2"/></g></svg>
      </div>`;
  }
}
